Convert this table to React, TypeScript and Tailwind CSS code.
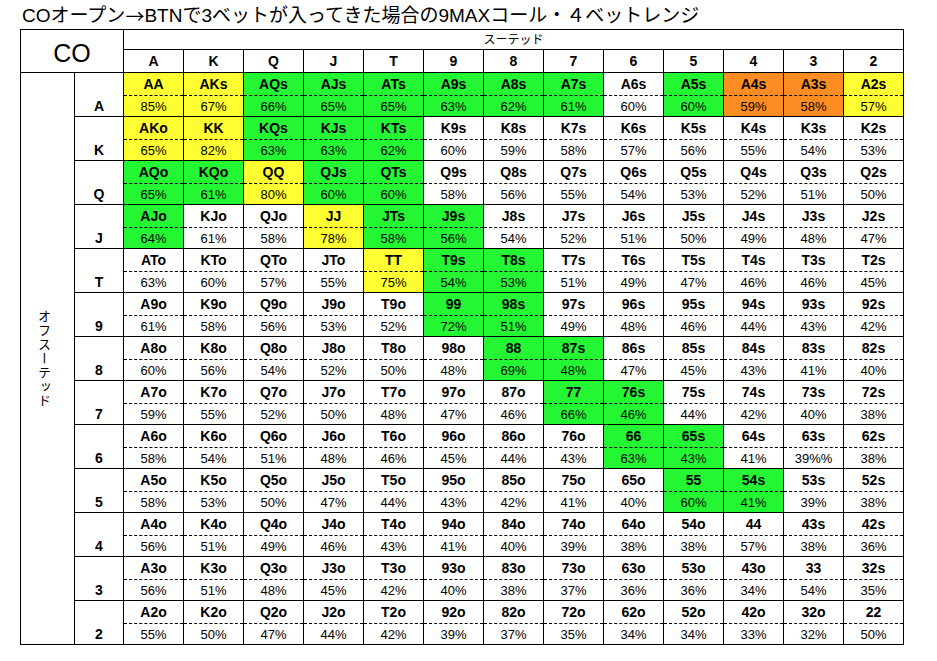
type Cell = [string, number, string]

const cols = ["A", "K", "Q", "J", "T", "9", "8", "7", "6", "5", "4", "3", "2"]

// y = yellow, g = green, o = orange, w = white
const data: Cell[][] = [
  [["AA", 85, "y"], ["AKs", 67, "y"], ["AQs", 66, "g"], ["AJs", 65, "g"], ["ATs", 65, "g"], ["A9s", 63, "g"], ["A8s", 62, "g"], ["A7s", 61, "g"], ["A6s", 60, "w"], ["A5s", 60, "g"], ["A4s", 59, "o"], ["A3s", 58, "o"], ["A2s", 57, "y"]],
  [["AKo", 65, "y"], ["KK", 82, "y"], ["KQs", 63, "g"], ["KJs", 63, "g"], ["KTs", 62, "g"], ["K9s", 60, "w"], ["K8s", 59, "w"], ["K7s", 58, "w"], ["K6s", 57, "w"], ["K5s", 56, "w"], ["K4s", 55, "w"], ["K3s", 54, "w"], ["K2s", 53, "w"]],
  [["AQo", 65, "g"], ["KQo", 61, "g"], ["QQ", 80, "y"], ["QJs", 60, "g"], ["QTs", 60, "g"], ["Q9s", 58, "w"], ["Q8s", 56, "w"], ["Q7s", 55, "w"], ["Q6s", 54, "w"], ["Q5s", 53, "w"], ["Q4s", 52, "w"], ["Q3s", 51, "w"], ["Q2s", 50, "w"]],
  [["AJo", 64, "g"], ["KJo", 61, "w"], ["QJo", 58, "w"], ["JJ", 78, "y"], ["JTs", 58, "g"], ["J9s", 56, "g"], ["J8s", 54, "w"], ["J7s", 52, "w"], ["J6s", 51, "w"], ["J5s", 50, "w"], ["J4s", 49, "w"], ["J3s", 48, "w"], ["J2s", 47, "w"]],
  [["ATo", 63, "w"], ["KTo", 60, "w"], ["QTo", 57, "w"], ["JTo", 55, "w"], ["TT", 75, "y"], ["T9s", 54, "g"], ["T8s", 53, "g"], ["T7s", 51, "w"], ["T6s", 49, "w"], ["T5s", 47, "w"], ["T4s", 46, "w"], ["T3s", 46, "w"], ["T2s", 45, "w"]],
  [["A9o", 61, "w"], ["K9o", 58, "w"], ["Q9o", 56, "w"], ["J9o", 53, "w"], ["T9o", 52, "w"], ["99", 72, "g"], ["98s", 51, "g"], ["97s", 49, "w"], ["96s", 48, "w"], ["95s", 46, "w"], ["94s", 44, "w"], ["93s", 43, "w"], ["92s", 42, "w"]],
  [["A8o", 60, "w"], ["K8o", 56, "w"], ["Q8o", 54, "w"], ["J8o", 52, "w"], ["T8o", 50, "w"], ["98o", 48, "w"], ["88", 69, "g"], ["87s", 48, "g"], ["86s", 47, "w"], ["85s", 45, "w"], ["84s", 43, "w"], ["83s", 41, "w"], ["82s", 40, "w"]],
  [["A7o", 59, "w"], ["K7o", 55, "w"], ["Q7o", 52, "w"], ["J7o", 50, "w"], ["T7o", 48, "w"], ["97o", 47, "w"], ["87o", 46, "w"], ["77", 66, "g"], ["76s", 46, "g"], ["75s", 44, "w"], ["74s", 42, "w"], ["73s", 40, "w"], ["72s", 38, "w"]],
  [["A6o", 58, "w"], ["K6o", 54, "w"], ["Q6o", 51, "w"], ["J6o", 48, "w"], ["T6o", 46, "w"], ["96o", 45, "w"], ["86o", 44, "w"], ["76o", 43, "w"], ["66", 63, "g"], ["65s", 43, "g"], ["64s", 41, "w"], ["63s", 39, "w"], ["62s", 38, "w"]],
  [["A5o", 58, "w"], ["K5o", 53, "w"], ["Q5o", 50, "w"], ["J5o", 47, "w"], ["T5o", 44, "w"], ["95o", 43, "w"], ["85o", 42, "w"], ["75o", 41, "w"], ["65o", 40, "w"], ["55", 60, "g"], ["54s", 41, "g"], ["53s", 39, "w"], ["52s", 38, "w"]],
  [["A4o", 56, "w"], ["K4o", 51, "w"], ["Q4o", 49, "w"], ["J4o", 46, "w"], ["T4o", 43, "w"], ["94o", 41, "w"], ["84o", 40, "w"], ["74o", 39, "w"], ["64o", 38, "w"], ["54o", 38, "w"], ["44", 57, "w"], ["43s", 38, "w"], ["42s", 36, "w"]],
  [["A3o", 56, "w"], ["K3o", 51, "w"], ["Q3o", 48, "w"], ["J3o", 45, "w"], ["T3o", 42, "w"], ["93o", 40, "w"], ["83o", 38, "w"], ["73o", 37, "w"], ["63o", 36, "w"], ["53o", 36, "w"], ["43o", 34, "w"], ["33", 54, "w"], ["32s", 35, "w"]],
  [["A2o", 55, "w"], ["K2o", 50, "w"], ["Q2o", 47, "w"], ["J2o", 44, "w"], ["T2o", 42, "w"], ["92o", 39, "w"], ["82o", 37, "w"], ["72o", 35, "w"], ["62o", 34, "w"], ["52o", 34, "w"], ["42o", 33, "w"], ["32o", 32, "w"], ["22", 50, "w"]],
]

const bg: Record<string, string> = {
  y: "bg-[#fefe33]",
  g: "bg-[#24f634]",
  o: "bg-[#fd8c23]",
  w: "bg-white",
}

function HandCell({ cell }: { cell: Cell }) {
  const [name, pct, color] = cell
  // the 63s cell has a stray extra % in the source chart
  const label = name === "63s" ? "39%%" : `${pct}%`
  return (
    <div className={`flex flex-col border-r border-b border-black ${bg[color]}`}>
      <div className="flex h-[23px] items-center justify-center border-b border-dashed border-black text-[14px] font-bold leading-none">
        {name}
      </div>
      <div className="flex flex-1 items-center justify-center text-[13px] leading-none">{label}</div>
    </div>
  )
}

export default function App() {
  return (
    <div className="min-h-[661px] w-[937px] bg-white text-black" style={{ fontFamily: '"Liberation Sans", "Noto Sans CJK JP", sans-serif' }}>
      <div className="flex h-[29px] items-center pl-[22px] pt-[2px] text-[19px] leading-none">
        COオープン
        <span style={{ fontFamily: '"Noto Sans CJK JP", sans-serif' }}>→</span>
        BTNで3ベットが入ってきた場合の9MAXコール・４ベットレンジ
      </div>

      <div className="ml-[20px] grid w-[884px] grid-cols-[54px_49px_repeat(13,60px)] grid-rows-[20px_23px_repeat(13,44px)] border-t border-l border-black">
        {/* CO corner */}
        <div className="col-span-2 row-span-2 flex items-center justify-center border-r border-b border-black pt-[4px] text-[25px] leading-none">
          CO
        </div>
        <div className="col-span-13 flex items-center justify-center border-r border-b border-black text-[12px] leading-none">
          スーテッド
        </div>
        {cols.map((c) => (
          <div key={c} className="flex items-center justify-center border-r border-b border-black text-[14px] font-bold leading-none">
            {c}
          </div>
        ))}

        {/* offsuit side label */}
        <div className="col-start-1 row-span-13 row-start-3 flex items-center justify-center border-r border-b border-black pr-[8px]">
          <span className="text-[13px] leading-[15px] [writing-mode:vertical-rl] tracking-[1px]">オフスーテッド</span>
        </div>

        {data.map((row, i) => (
          <div key={cols[i]} className="contents">
            <div className="col-start-2 flex items-center justify-center border-r border-b border-black pt-[22px] text-[14px] font-bold leading-none">
              {cols[i]}
            </div>
            {row.map((cell) => (
              <HandCell key={cell[0]} cell={cell} />
            ))}
          </div>
        ))}
      </div>
    </div>
  )
}
